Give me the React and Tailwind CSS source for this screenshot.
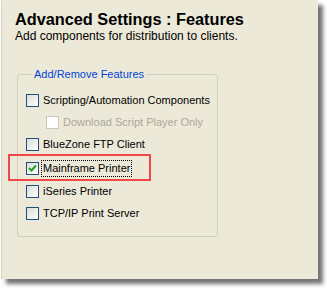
import React from 'react';

const font = { fontFamily: '"Liberation Sans", Arial, sans-serif' };

function Box({ checked, disabled }) {
  if (disabled) {
    return <span className="w-[13px] h-[13px] shrink-0 border border-[#cac8bb] bg-white" />;
  }
  return (
    <span className="w-[13px] h-[13px] shrink-0 border border-[#1c5180] bg-gradient-to-br from-[#dcdcd5] to-white flex items-center justify-center">
      {checked && (
        <svg width="9" height="9" viewBox="0 0 9 9">
          <path d="M1 4 L3.5 6.5 L8 1.5" fill="none" stroke="#21a121" strokeWidth="2" />
        </svg>
      )}
    </span>
  );
}

function Row({ label, checked, disabled, focused, className = '' }) {
  return (
    <div className={`h-[22px] flex items-center whitespace-nowrap ${className}`}>
      <Box checked={checked} disabled={disabled} />
      <span
        className={`ml-[3px] px-[1px] text-[11px] leading-[15px] ${disabled ? 'text-[#aca899]' : 'text-black'} ${focused ? 'outline outline-1 outline-dotted outline-black' : ''}`}
      >
        {label}
      </span>
    </div>
  );
}

export default function App() {
  return (
    <div className="w-[327px] h-[288px] bg-white overflow-hidden" style={font}>
      <div className="relative w-[317px] h-[279px] ml-[1px] bg-[#ece9d8] border-l border-[#d6d3c2] shadow-[5px_5px_4px_rgba(0,0,0,0.55)] pt-[10px] pl-[13px]">
        <h1 className="text-[16.3px] leading-[18px] font-bold text-black whitespace-nowrap">Advanced Settings : Features</h1>
        <p className="mt-[1px] text-[12px] leading-[14px] text-black whitespace-nowrap">Add components for distribution to clients.</p>

        <fieldset className="mt-[25px] ml-[2px] w-[201px] min-w-0 border border-[#d0d0bf] rounded-[3px] pl-[8px] pr-0 pt-[8px] pb-[12px] overflow-visible">
          <legend className="ml-[6px] px-[2px] text-[11px] leading-[13px] text-[#0046d5] whitespace-nowrap">Add/Remove Features</legend>
          <Row label="Scripting/Automation Components" />
          <Row label="Download Script Player Only" disabled className="pl-[20px]" />
          <Row label="BlueZone FTP Client" />
          <Row label="Mainframe Printer" checked focused className="mt-[2px]" />
          <Row label="iSeries Printer" className="mt-[1px]" />
          <Row label="TCP/IP Print Server" />
        </fieldset>

        <div className="absolute left-[6px] top-[154px] w-[143px] h-[27px] border-2 border-[#f04848]" />
      </div>
    </div>
  );
}
